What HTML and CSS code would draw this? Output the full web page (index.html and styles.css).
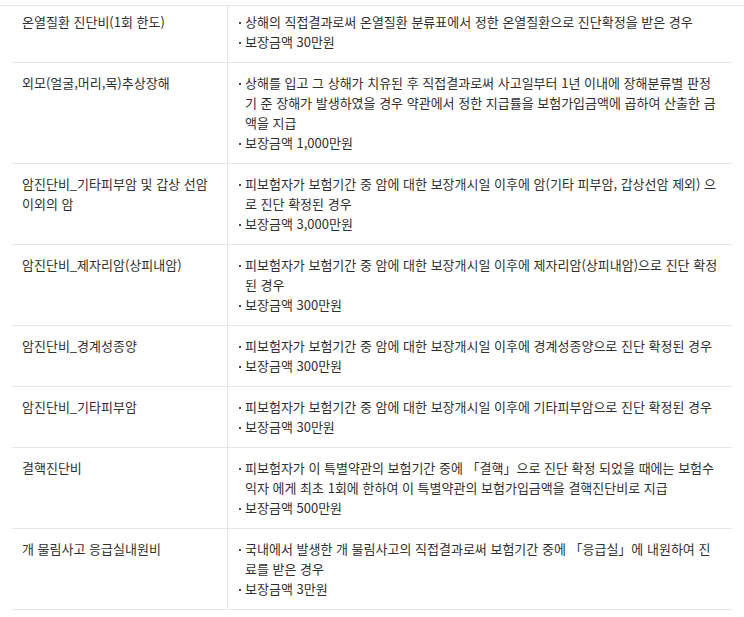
FILE: index.html
```html
<!DOCTYPE html>
<html lang="ko">
<head>
<meta charset="utf-8">
<title>보장내용</title>
<link rel="stylesheet" href="styles.css">
</head>
<body>
<div class="top-rule"></div>
<div class="table">
  <div class="row first">
    <div class="name">온열질환 진단비(1회 한도)</div>
    <ul class="desc">
      <li>상해의 직접결과로써 온열질환 분류표에서 정한 온열질환으로 진단확정을 받은 경우</li>
      <li>보장금액 30만원</li>
    </ul>
  </div>
  <div class="row">
    <div class="name">외모(얼굴,머리,목)추상장해</div>
    <ul class="desc">
      <li>상해를 입고 그 상해가 치유된 후 직접결과로써 사고일부터 1년 이내에 장해분류별 판정<br>기 준 장해가 발생하였을 경우 약관에서 정한 지급률을 보험가입금액에 곱하여 산출한 금<br>액을 지급</li>
      <li>보장금액 1,000만원</li>
    </ul>
  </div>
  <div class="row">
    <div class="name">암진단비_기타피부암 및 갑상 선암<br>이외의 암</div>
    <ul class="desc">
      <li>피보험자가 보험기간 중 암에 대한 보장개시일 이후에 암(기타 피부암, 갑상선암 제외) 으<br>로 진단 확정된 경우</li>
      <li>보장금액 3,000만원</li>
    </ul>
  </div>
  <div class="row">
    <div class="name">암진단비_제자리암(상피내암)</div>
    <ul class="desc">
      <li>피보험자가 보험기간 중 암에 대한 보장개시일 이후에 제자리암(상피내암)으로 진단 확정<br>된 경우</li>
      <li>보장금액 300만원</li>
    </ul>
  </div>
  <div class="row">
    <div class="name">암진단비_경계성종양</div>
    <ul class="desc">
      <li>피보험자가 보험기간 중 암에 대한 보장개시일 이후에 경계성종양으로 진단 확정된 경우</li>
      <li>보장금액 300만원</li>
    </ul>
  </div>
  <div class="row">
    <div class="name">암진단비_기타피부암</div>
    <ul class="desc">
      <li>피보험자가 보험기간 중 암에 대한 보장개시일 이후에 기타피부암으로 진단 확정된 경우</li>
      <li>보장금액 30만원</li>
    </ul>
  </div>
  <div class="row">
    <div class="name">결핵진단비</div>
    <ul class="desc">
      <li>피보험자가 이 특별약관의 보험기간 중에 「결핵」으로 진단 확정 되었을 때에는 보험수<br>익자 에게 최초 1회에 한하여 이 특별약관의 보험가입금액을 결핵진단비로 지급</li>
      <li>보장금액 500만원</li>
    </ul>
  </div>
  <div class="row">
    <div class="name">개 물림사고 응급실내원비</div>
    <ul class="desc">
      <li>국내에서 발생한 개 물림사고의 직접결과로써 보험기간 중에 「응급실」에 내원하여 진<br>료를 받은 경우</li>
      <li>보장금액 3만원</li>
    </ul>
  </div>
</div>
</body>
</html>
```
FILE: styles.css
```css
* { box-sizing: border-box; }
html, body {
  margin: 0;
  padding: 0;
  background: #fff;
}
body {
  font-family: "Noto Sans CJK KR", "Noto Sans", sans-serif;
  font-size: 13px;
  line-height: 20px;
  letter-spacing: 0;
  color: #2f2f2f;
}
.top-rule {
  height: 6px;
  border-bottom: 1px solid #e6e6e6;
}
.table {
  margin: 0 12px;
}
.row {
  display: grid;
  grid-template-columns: 216px 1fr;
  border-bottom: 1px solid #e6e6e6;
}
.name {
  padding: 10px 10px;
  border-right: 1px solid #e6e6e6;
}
.desc {
  list-style: none;
  margin: 0;
  padding: 10px 4px 10px 17px;
}
.row.first .name,
.row.first .desc {
  padding-top: 6px;
}
.desc li {
  white-space: nowrap;
}
.desc li::before {
  content: "";
  display: inline-block;
  width: 2px;
  height: 2px;
  background: #444;
  margin-left: -6px;
  margin-right: 4px;
  vertical-align: middle;
}
```
